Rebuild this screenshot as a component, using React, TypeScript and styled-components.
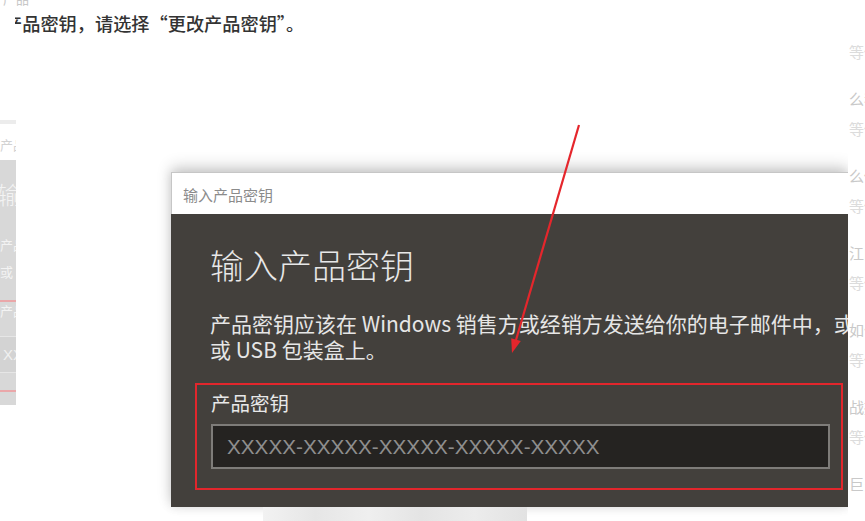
import React from "react";
import styled, { createGlobalStyle } from "styled-components";

const GlobalStyle = createGlobalStyle`
  html, body { margin: 0; padding: 0; background: #ffffff; }
  body { font-family: "Noto Sans CJK SC", "Noto Sans", sans-serif; }
  #root { width: 865px; height: 521px; overflow: hidden; }
`;

const Page = styled.div`
  display: flex;
  width: 865px;
  height: 521px;
  overflow: hidden;
  background: #ffffff;
`;

const Main = styled.div`
  width: 848px;
  flex: none;
  display: flex;
  flex-direction: column;
  overflow: hidden;
`;

const TopFragment = styled.div`
  height: 8px;
  overflow: hidden;
  padding-left: 3px;
  font-size: 13px;
  color: #c8c8c8;
  span { display: block; line-height: 16px; margin-top: -9px; }
`;

const ArticleLine = styled.div`
  height: 32px;
  margin-left: 15px;
  overflow: hidden;
  white-space: nowrap;
  font-size: 18.2px;
  font-weight: 500;
  line-height: 32px;
  color: #333333;
  span { display: inline-block; margin-left: -11px; }
`;

const Screenshot = styled.div`
  position: relative;
  display: flex;
  align-items: flex-start;
  flex: 1;
`;

const Ghost = styled.div`
  width: 16px;
  flex: none;
  margin-top: 83px;
  overflow: hidden;
  display: flex;
  flex-direction: column;
  white-space: nowrap;
`;

const GhostTopLine = styled.div`
  height: 4px;
  background: #ececec;
`;

const GhostCaption = styled.div`
  margin-top: 12px;
  font-size: 13px;
  line-height: 18px;
  color: #d2d2d2;
`;

const GhostBlock = styled.div`
  margin-top: 6px;
  height: 245px;
  background: #d8d8d8;
  display: flex;
  flex-direction: column;
  overflow: hidden;
`;

const GhostHeading = styled.div`
  margin: 19px 0 0 -3px;
  font-size: 24px;
  line-height: 30px;
  font-weight: 300;
  color: #f3f3f3;
`;

const GhostText = styled.div<{ $mt: number }>`
  margin-top: ${(p) => p.$mt}px;
  font-size: 13px;
  line-height: 18px;
  color: #f3f3f3;
`;

const GhostRule = styled.div<{ $mt: number }>`
  margin-top: ${(p) => p.$mt}px;
  height: 2px;
  background: #eaa7a9;
`;

const GhostInput = styled.div`
  margin-top: 16px;
  height: 37px;
  box-sizing: border-box;
  border-top: 1px solid #e6e6e6;
  border-bottom: 1px solid #e6e6e6;
  background: #d3d3d3;
  font-family: "Liberation Sans", sans-serif;
  font-size: 15px;
  line-height: 35px;
  color: #f0f0f0;
  padding-left: 3px;
`;

const DialogColumn = styled.div`
  margin: 135px 0 0 155px;
  display: flex;
  flex-direction: column;
  flex: none;
`;

const Dialog = styled.div`
  width: 677px;
  box-shadow: 0 -6px 14px rgba(0, 0, 0, 0.16), 0 0 10px rgba(0, 0, 0, 0.12);
`;

const TitleBar = styled.div`
  height: 42px;
  box-sizing: border-box;
  background: #ffffff;
  border: 1px solid #c6c6c6;
  border-bottom: none;
  border-right: none;
  padding-left: 11px;
  font-size: 15px;
  line-height: 43px;
  color: #8b8b8b;
`;

const Body = styled.div`
  background: #43403c;
  padding: 29px 0 17px 39px;
  display: flex;
  flex-direction: column;
  white-space: nowrap;
  overflow: hidden;
`;

const Heading = styled.div`
  font-size: 34px;
  line-height: 44px;
  font-weight: 300;
  color: #e8e8e8;
`;

const Paragraph = styled.div`
  margin-top: 23px;
  font-size: 21px;
  line-height: 26px;
  color: #e6e6e6;
  overflow: hidden;
`;

const KeyBox = styled.div`
  margin: 21px 0 0 -15px;
  width: 648px;
  flex: none;
  box-sizing: border-box;
  border: 2px solid #e2262c;
  padding: 6px 11px 19px 14px;
  display: flex;
  flex-direction: column;
`;

const KeyLabel = styled.div`
  font-size: 19.5px;
  line-height: 24px;
  color: #e8e8e8;
  margin-bottom: 9px;
`;

const KeyInput = styled.div`
  height: 45px;
  box-sizing: border-box;
  border: 2px solid #7e7c79;
  background: #252321;
  padding-left: 14px;
  font-family: "Liberation Sans", sans-serif;
  font-size: 20.7px;
  line-height: 41px;
  color: #8e8e8e;
`;

const BlurStrip = styled.div`
  margin-left: 92px;
  width: 264px;
  height: 14px;
  background: linear-gradient(90deg, #f2f2f2 0%, #e6e6e6 20%, #efefef 40%, #e4e4e4 60%, #ececec 80%, #e2e2e2 100%);
`;

const ArrowLayer = styled.svg`
  position: absolute;
  left: 0;
  top: 0;
  width: 848px;
  height: 481px;
  pointer-events: none;
`;

const Sidebar = styled.div`
  flex: 1;
  overflow: hidden;
  padding: 42px 0 0 1px;
  display: flex;
  flex-direction: column;
  white-space: nowrap;
`;

const SideTitle = styled.div`
  margin-top: 27px;
  font-size: 15px;
  line-height: 20px;
  color: #c9c9c9;
`;

const SideMeta = styled.div<{ $first?: boolean }>`
  margin-top: ${(p) => (p.$first ? 0 : 10)}px;
  font-size: 15px;
  line-height: 20px;
  color: #dcdcdc;
`;

const sideItems = ["么我们", "么你的", "江门市", "如何", "战报", "巨多"];

export default function App() {
  return (
    <>
      <GlobalStyle />
      <Page>
        <Main>
          <TopFragment>
            <span>产品</span>
          </TopFragment>
          <ArticleLine>
            <span>产品密钥，请选择“更改产品密钥”。</span>
          </ArticleLine>
          <Screenshot>
            <Ghost>
              <GhostTopLine />
              <GhostCaption>产品密钥</GhostCaption>
              <GhostBlock>
                <GhostHeading>输入</GhostHeading>
                <GhostText $mt={27}>产品</GhostText>
                <GhostText $mt={9}>或 USB</GhostText>
                <GhostRule $mt={19} />
                <GhostText $mt={0}>产品</GhostText>
                <GhostInput>XXXXX</GhostInput>
                <GhostRule $mt={17} />
              </GhostBlock>
            </Ghost>
            <DialogColumn>
              <Dialog>
                <TitleBar>输入产品密钥</TitleBar>
                <Body>
                  <Heading>输入产品密钥</Heading>
                  <Paragraph>
                    产品密钥应该在 Windows 销售方或经销方发送给你的电子邮件中，或
                    <br />
                    或 USB 包装盒上。
                  </Paragraph>
                  <KeyBox>
                    <KeyLabel>产品密钥</KeyLabel>
                    <KeyInput>XXXXX-XXXXX-XXXXX-XXXXX-XXXXX</KeyInput>
                  </KeyBox>
                </Body>
              </Dialog>
              <BlurStrip />
            </DialogColumn>
            <ArrowLayer viewBox="0 0 848 481">
              <line x1="579" y1="88" x2="516" y2="303" stroke="#e5262c" strokeWidth="2.2" />
              <polygon points="512,316 520.8,304 511.2,301.2" fill="#e5262c" />
            </ArrowLayer>
          </Screenshot>
        </Main>
        <Sidebar>
          <SideMeta $first>等你来</SideMeta>
          {sideItems.map((t, i) => (
            <React.Fragment key={i}>
              <SideTitle>{t}</SideTitle>
              {i < sideItems.length - 1 && <SideMeta>等你来</SideMeta>}
            </React.Fragment>
          ))}
        </Sidebar>
      </Page>
    </>
  );
}
